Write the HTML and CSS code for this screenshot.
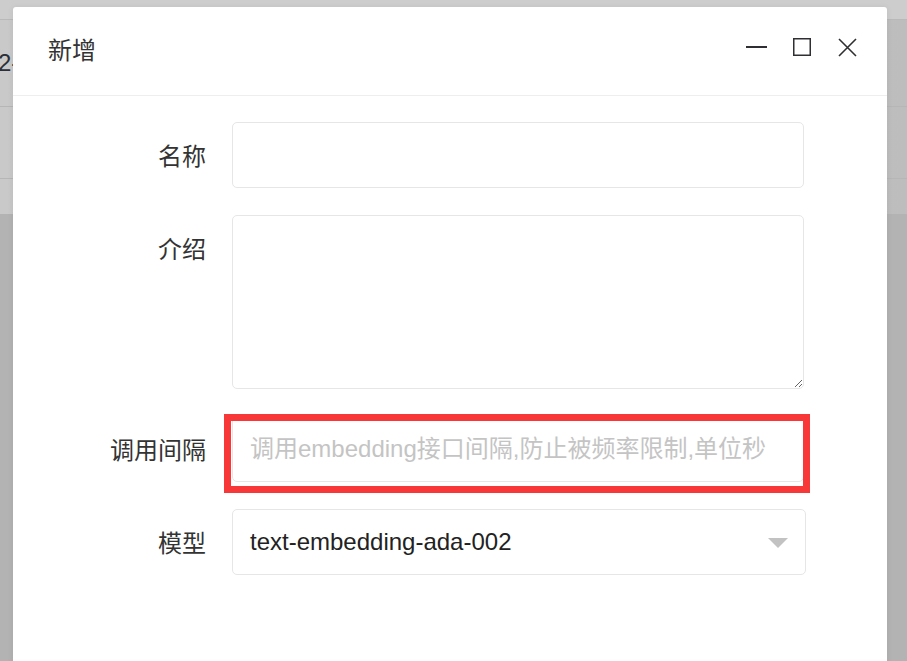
FILE: index.html
```html
<!DOCTYPE html>
<html lang="zh-CN">
<head>
<meta charset="utf-8">
<title>新增</title>
<link rel="stylesheet" href="styles.css">
</head>
<body>
<div class="page">
  <div class="page-top"></div>
  <div class="page-row"><span class="page-text">2-</span></div>
  <div class="page-row2"></div>
  <div class="page-band"></div>
  <div class="page-rest"></div>
</div>

<div class="dialog">
  <div class="dialog-header">
    <div class="dialog-title">新增</div>
    <div class="dialog-tools">
      <svg class="tool" width="22" height="22" viewBox="0 0 22 22"><rect x="0" y="8" width="21" height="2" fill="#2f2f33"/></svg>
      <svg class="tool" width="22" height="22" viewBox="0 0 22 22"><rect x="1.75" y="0.75" width="16.5" height="16.5" fill="none" stroke="#2f2f33" stroke-width="1.5"/></svg>
      <svg class="tool" width="22" height="22" viewBox="0 0 22 22"><path d="M1 1 L18 18 M18 1 L1 18" stroke="#2f2f33" stroke-width="1.6" fill="none"/></svg>
    </div>
  </div>
  <div class="dialog-body">
    <div class="form-row">
      <label class="form-label">名称</label>
      <input class="form-input" type="text">
    </div>
    <div class="form-row">
      <label class="form-label">介绍</label>
      <textarea class="form-textarea"></textarea>
    </div>
    <div class="form-row">
      <label class="form-label">调用间隔</label>
      <div class="input-wrap">
        <input class="form-input" type="text" placeholder="调用embedding接口间隔,防止被频率限制,单位秒">
        <div class="highlight"></div>
      </div>
    </div>
    <div class="form-row">
      <label class="form-label">模型</label>
      <div class="form-select">
        <span class="select-value">text-embedding-ada-002</span>
        <span class="select-arrow"></span>
      </div>
    </div>
  </div>
</div>
</body>
</html>
```

FILE: styles.css
```css
html, body {
  margin: 0;
  padding: 0;
  height: 100%;
  overflow: hidden;
}
body {
  font-family: "Liberation Sans", "Noto Sans CJK SC", sans-serif;
  background: #c2c2c2;
  position: relative;
}

/* background page (under shade) */
.page {
  display: flex;
  flex-direction: column;
  background: linear-gradient(to right, #c9c9c9 0%, #c4c4c4 50%, #bdbdbd 100%);
  height: 100%;
}
.page-top {
  height: 19px;
  border-bottom: 1px solid #b9b9b9;
  background: #cdcdcd;
}
.page-row {
  height: 86px;
  border-bottom: 1px solid #b6b6b6;
  display: flex;
  align-items: center;
}
.page-text {
  font-size: 24px;
  color: #2b2f38;
  margin-left: -2px;
}
.page-row2 {
  height: 71px;
  border-bottom: 1px solid #b6b6b6;
}
.page-band {
  height: 35px;
}
.page-rest {
  flex: 1;
  background: #b3b3b3;
}

/* dialog */
.dialog {
  position: absolute;
  left: 13px;
  top: 7px;
  width: 874px;
  height: 720px;
  background: #fff;
  border-radius: 3px;
  box-shadow: 0 1px 6px rgba(0, 0, 0, 0.08);
}
.dialog-header {
  height: 88px;
  border-bottom: 1px solid #eeeeee;
  display: flex;
  align-items: center;
  justify-content: space-between;
  padding: 0 27px 0 35px;
}
.dialog-title {
  font-size: 24px;
  color: #333;
  font-family: "Noto Sans CJK SC", sans-serif;
  margin-top: -6px;
}
.dialog-tools {
  display: flex;
  gap: 24px;
  align-items: center;
  margin-top: -4px;
}
.tool {
  display: block;
}

.dialog-body {
  padding-top: 26px;
  display: flex;
  flex-direction: column;
  gap: 27px;
}
.form-row {
  display: flex;
  align-items: flex-start;
}
.form-label {
  width: 193px;
  margin-right: 26px;
  text-align: right;
  height: 66px;
  line-height: 66px;
  font-size: 24px;
  color: #333;
  font-family: "Noto Sans CJK SC", sans-serif;
  flex-shrink: 0;
}
.form-input {
  box-sizing: border-box;
  width: 572px;
  height: 66px;
  border: 1px solid #e6e6e6;
  border-radius: 5px;
  padding: 0 17px;
  font-size: 24px;
  font-family: "Liberation Sans", "Noto Sans CJK SC", sans-serif;
  color: #333;
  outline: none;
  background: #fff;
  margin: 0;
  display: block;
}
.form-input::placeholder {
  color: #c4c4c4;
}
.form-textarea {
  box-sizing: border-box;
  width: 572px;
  height: 174px;
  border: 1px solid #e6e6e6;
  border-radius: 5px;
  padding: 12px 17px;
  font-size: 24px;
  font-family: "Liberation Sans", "Noto Sans CJK SC", sans-serif;
  outline: none;
  resize: vertical;
  margin: 0;
  display: block;
}
.input-wrap {
  position: relative;
}
.highlight {
  position: absolute;
  left: -8px;
  top: -2px;
  width: 572px;
  height: 65px;
  border: 7px solid #f83838;
  box-sizing: content-box;
  pointer-events: none;
}
.form-select {
  box-sizing: border-box;
  width: 574px;
  height: 66px;
  border: 1px solid #e6e6e6;
  border-radius: 5px;
  padding: 0 17px;
  display: flex;
  align-items: center;
  justify-content: space-between;
}
.select-value {
  font-size: 24px;
  color: #222;
}
.select-arrow {
  width: 0;
  height: 0;
  border-left: 10px solid transparent;
  border-right: 10px solid transparent;
  border-top: 10px solid #c2c2c2;
  margin-top: 2px;
}
```
